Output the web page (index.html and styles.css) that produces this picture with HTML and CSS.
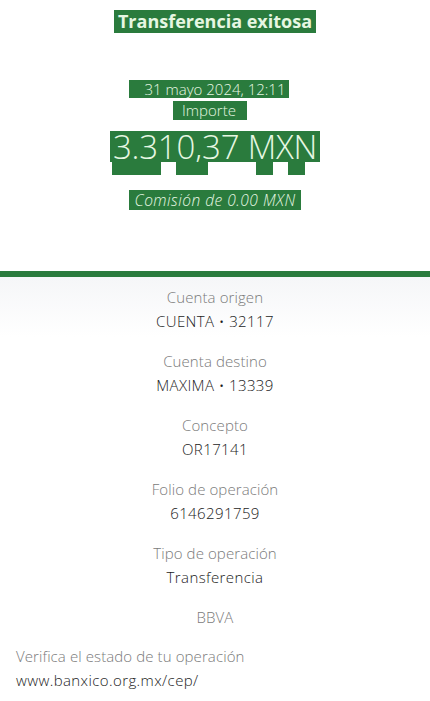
FILE: index.html
```html
<!DOCTYPE html>
<html lang="es">

<head>
    <meta charset="UTF-8">
    <title>Transferencia exitosa</title>
    <link rel="stylesheet" href="styles.css">
</head>

<body>
    <header class="top">
        <div class="title"><span>Transferencia exitosa</span></div>
        <div class="date"><span>31 mayo 2024, 12:11</span></div>
        <div class="label"><span>Importe</span></div>
        <div class="amount"><span>3.310,37 MXN</span></div>
        <div class="marks">
            <i class="m1"></i><i class="m2"></i><i class="m3"></i><i class="m4"></i>
        </div>
        <div class="fee"><span>Comisión de 0.00 MXN</span></div>
    </header>
    <div class="bar"></div>
    <section class="details">
        <div class="item">
            <p class="key">Cuenta origen</p>
            <p class="val">CUENTA • 32117</p>
        </div>
        <div class="item">
            <p class="key">Cuenta destino</p>
            <p class="val">MAXIMA • 13339</p>
        </div>
        <div class="item">
            <p class="key">Concepto</p>
            <p class="val">OR17141</p>
        </div>
        <div class="item">
            <p class="key">Folio de operación</p>
            <p class="val">6146291759</p>
        </div>
        <div class="item">
            <p class="key">Tipo de operación</p>
            <p class="val">Transferencia</p>
        </div>
        <div class="item short">
            <p class="key">BBVA</p>
        </div>
    </section>
    <footer>
        <p class="key">Verifica el estado de tu operación</p>
        <p class="val">www.banxico.org.mx/cep/</p>
    </footer>
</body>

</html>
```

FILE: styles.css
```css
body {
    margin: 0;
    width: 430px;
    height: 701px;
    overflow: hidden;
    background: #fff;
    font-family: "Open Sans", "Liberation Sans", sans-serif;
    font-weight: 300;
}

p {
    margin: 0;
}

.top {
    text-align: center;
    color: #e6f7e2;
    padding-top: 10px;
}

.top span {
    display: inline-block;
    vertical-align: top;
    background: #2a7b3d;
}

.title {
    font-size: 18px;
    font-weight: 700;
    line-height: 23px;
}

.title span {
    padding: 0 4px;
}

.date {
    margin-top: 47px;
    font-size: 15px;
    line-height: 18px;
}

.date span {
    padding: 0 4px 0 16px;
    margin-right: 12px;
}

.label {
    margin-top: 3px;
    font-size: 15px;
    line-height: 19px;
}

.label span {
    padding: 0 11px 0 9px;
    margin-right: 10px;
}

.amount {
    margin-top: 11px;
    font-size: 33px;
    line-height: 31px;
}

.amount span {
    padding: 0 3px;
    letter-spacing: -0.2px;
}

.marks {
    display: flex;
    height: 13px;
    padding-left: 112px;
}

.marks i {
    display: block;
    background: #2a7b3d;
    height: 13px;
}

.m1 {
    width: 49px;
}

.m2 {
    width: 32px;
    margin-left: 15px;
}

.m3 {
    width: 17px;
    margin-left: 48px;
}

.m4 {
    width: 17px;
    margin-left: 15px;
}

.fee {
    margin-top: 15px;
    font-size: 15.5px;
    font-style: italic;
    line-height: 20px;
    letter-spacing: 0.5px;
}

.fee span {
    padding: 0 5px;
}

.bar {
    height: 5px;
    margin-top: 61px;
    background: #2a7b3d;
    border-top: 1px dotted #2a7b3d;
}

.details {
    background: linear-gradient(#f5f6f8, #fff 60px);
    padding-top: 10px;
    text-align: center;
}

.item {
    height: 64px;
}

.item.short {
    height: 39px;
}

.key {
    font-size: 15px;
    line-height: 20px;
    color: #7a7a7a;
    letter-spacing: 0.1px;
}

.val {
    font-size: 15px;
    line-height: 20px;
    margin-top: 4px;
    color: #1c1c1c;
    letter-spacing: 0.4px;
}

footer {
    padding: 0 16px;
}
```
